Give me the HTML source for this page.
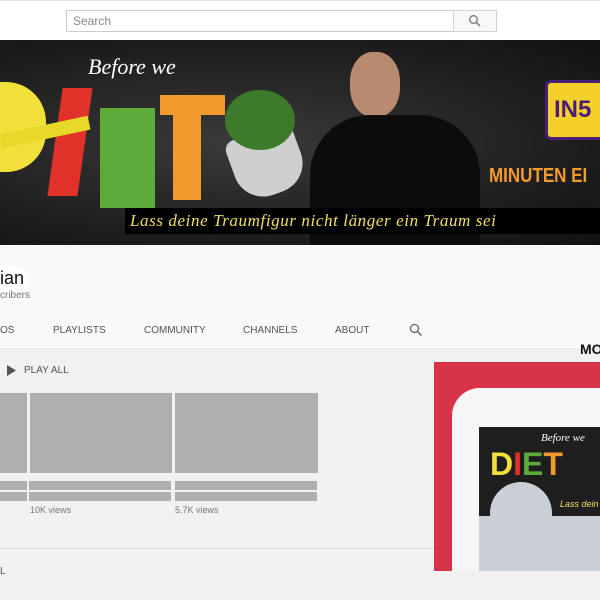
<!DOCTYPE html>
<html><head><style>
*{margin:0;padding:0;box-sizing:border-box}
body{width:600px;height:600px;overflow:hidden;background:#f1f1f1;font-family:"Liberation Sans",sans-serif;position:relative}
.a{position:absolute}
</style></head><body>
<div class="a" style="left:0;top:0;width:600px;height:40px;background:#fff;border-top:1px solid #e0e0e0"></div>
<div class="a" style="left:66px;top:10px;width:388px;height:22px;border:1px solid #ccc;background:#fff;font-size:12px;color:#888;padding:3px 6px">Search</div>
<div class="a" style="left:453px;top:10px;width:44px;height:22px;border:1px solid #d3d3d3;background:#f8f8f8"></div>
<svg class="a" style="left:468px;top:14px" width="14" height="14" viewBox="0 0 14 14"><circle cx="5.5" cy="5.5" r="3.8" fill="none" stroke="#777" stroke-width="1.3"/><line x1="8.3" y1="8.3" x2="12" y2="12" stroke="#777" stroke-width="1.5"/></svg>
<!-- banner -->
<div class="a" style="left:0;top:40px;width:600px;height:205px;background:radial-gradient(ellipse at 40% 50%,#3a3a3a,#1c1c1c 70%,#121212)"></div>
<div class="a" style="left:88px;top:54px;font-family:'Liberation Serif',serif;font-style:italic;color:#fff;font-size:22px">Before we</div>
<div class="a" style="left:-6px;top:82px;width:52px;height:90px;background:#f2e03a;border-radius:0 40px 40px 0"></div>
<div class="a" style="left:55px;top:88px;width:30px;height:108px;background:#e03228;transform:skewX(-8deg)"></div>
<div class="a" style="left:0;top:125px;width:90px;height:14px;background:#e8d82a;transform:rotate(-12deg)"></div>
<div class="a" style="left:100px;top:108px;width:55px;height:100px;background:#5eab3c"></div>
<div class="a" style="left:160px;top:95px;width:65px;height:20px;background:#f29a2e"></div>
<div class="a" style="left:173px;top:95px;width:28px;height:105px;background:#f29a2e"></div>
<div class="a" style="left:232px;top:130px;width:70px;height:65px;background:#cfcfcf;border-radius:10px 10px 30px 30px;transform:rotate(-20deg)"></div>
<div class="a" style="left:225px;top:90px;width:70px;height:60px;background:#3e7a2c;border-radius:50%"></div>
<div class="a" style="left:350px;top:52px;width:50px;height:65px;background:#b88a70;border-radius:45%"></div>
<div class="a" style="left:310px;top:115px;width:170px;height:130px;background:#0c0c0c;border-radius:60px 60px 0 0"></div>
<div class="a" style="left:545px;top:80px;width:60px;height:60px;background:#f6d02a;border:3px solid #4a1d78;border-radius:6px"></div>
<div class="a" style="left:554px;top:96px;font-size:24px;font-weight:bold;color:#4a1d78">IN5</div>
<div class="a" style="left:489px;top:165px;font-size:20px;font-weight:bold;color:#f29a2e;white-space:nowrap;transform:scaleX(0.85);transform-origin:left">MINUTEN EI</div>
<div class="a" style="left:125px;top:208px;width:475px;height:26px;background:#000"></div>
<div class="a" style="left:130px;top:211px;font-size:17px;color:#f0e060;font-style:italic;white-space:nowrap;font-family:'Liberation Serif',serif;letter-spacing:0.6px">Lass deine Traumfigur nicht länger ein Traum sei</div>
<!-- header -->
<div class="a" style="left:0;top:245px;width:600px;height:103px;background:#f9f9f9"></div>
<div class="a" style="left:-10px;top:266px;width:38px;height:28px;background:#fff;border-radius:14px"></div>
<div class="a" style="left:0;top:268px;font-size:18px;color:#111">ian</div>
<div class="a" style="left:0;top:290px;font-size:10px;color:#777">cribers</div>
<div class="a" style="top:325px;left:0;font-size:10px;color:#555;white-space:nowrap">
<span class="a" style="left:0">OS</span><span class="a" style="left:53px">PLAYLISTS</span><span class="a" style="left:144px">COMMUNITY</span><span class="a" style="left:243px">CHANNELS</span><span class="a" style="left:335px">ABOUT</span></div>
<svg class="a" style="left:409px;top:323px" width="14" height="14" viewBox="0 0 14 14"><circle cx="5.5" cy="5.5" r="4" fill="none" stroke="#666" stroke-width="1.3"/><line x1="8.5" y1="8.5" x2="12.5" y2="12.5" stroke="#666" stroke-width="1.5"/></svg>
<!-- content -->
<svg class="a" style="left:7px;top:365px" width="10" height="11"><polygon points="0,0 9,5.5 0,11" fill="#555"/></svg>
<div class="a" style="left:24px;top:365px;font-size:10px;color:#555">PLAY ALL</div>
<div class="a" style="left:0;top:393px;width:27px;height:80px;background:#afafaf"></div>
<div class="a" style="left:30px;top:393px;width:142px;height:80px;background:#afafaf"></div>
<div class="a" style="left:175px;top:393px;width:143px;height:80px;background:#afafaf"></div>
<div class="a" style="left:0;top:481px;width:27px;height:9px;background:#afafaf"></div>
<div class="a" style="left:29px;top:481px;width:142px;height:9px;background:#afafaf"></div>
<div class="a" style="left:175px;top:481px;width:142px;height:9px;background:#afafaf"></div>
<div class="a" style="left:0;top:492px;width:27px;height:9px;background:#afafaf"></div>
<div class="a" style="left:29px;top:492px;width:142px;height:9px;background:#afafaf"></div>
<div class="a" style="left:175px;top:492px;width:142px;height:9px;background:#afafaf"></div>
<div class="a" style="left:30px;top:505px;font-size:9px;color:#777">10K views</div>
<div class="a" style="left:175px;top:505px;font-size:9px;color:#777">5.7K views</div>
<div class="a" style="left:0;top:548px;width:434px;height:1px;background:#ddd"></div>
<div class="a" style="left:0;top:566px;font-size:10px;color:#555">L</div>
<div class="a" style="left:580px;top:341px;font-size:14px;font-weight:bold;color:#111">MO</div>
<div class="a" style="left:434px;top:362px;width:166px;height:209px;background:#d9334a"></div>
<div class="a" style="left:452px;top:388px;width:160px;height:183px;background:#f5f6f8;border-radius:28px 0 0 0"></div>
<div class="a" style="left:479px;top:427px;width:121px;height:89px;background:#1e1e1e"></div>
<div class="a" style="left:541px;top:432px;font-size:11px;color:#fff;font-style:italic;font-family:'Liberation Serif',serif">Before we</div>
<div class="a" style="left:490px;top:447px;width:110px;height:35px;font-size:32px;font-weight:bold;color:#f2e03a;line-height:35px">D<span style="color:#e03228">I</span><span style="color:#5eab3c">E</span><span style="color:#f29a2e">T</span></div>
<div class="a" style="left:560px;top:499px;font-size:9px;color:#f0e060;font-style:italic">Lass dein</div>
<div class="a" style="left:479px;top:516px;width:121px;height:55px;background:#cbd0d8"></div>
<div class="a" style="left:490px;top:482px;width:62px;height:62px;background:#cbd0d8;border-radius:50%"></div>
</body></html>
